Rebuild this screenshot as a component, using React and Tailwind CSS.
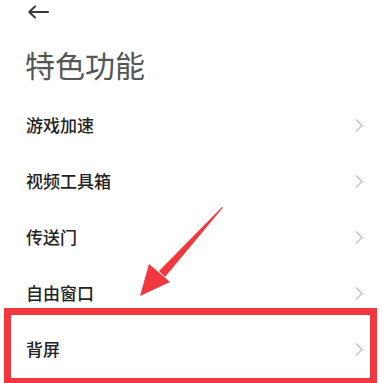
const items = ["游戏加速", "视频工具箱", "传送门", "自由窗口", "背屏"];

function Chevron() {
  return (
    <svg width="9" height="13" viewBox="0 0 9 13" fill="none">
      <path
        d="M1.5 1L7 6.5L1.5 12"
        stroke="#c6c6c6"
        strokeWidth="1.6"
        strokeLinecap="round"
        strokeLinejoin="round"
      />
    </svg>
  );
}

export default function App() {
  return (
    <div
      className="relative w-[382px] h-[383px] overflow-hidden bg-white"
      style={{ fontFamily: '"Noto Sans CJK SC", "Noto Sans", sans-serif' }}
    >
      {/* Back arrow */}
      <div className="h-[25px] pl-[27px] pt-[5px]">
        <svg width="22" height="14" viewBox="0 0 22 14" fill="none">
          <path
            d="M21 7H3M8 1.5L2.2 7L8 12.5"
            stroke="#3a3a3a"
            strokeWidth="2"
            strokeLinecap="round"
            strokeLinejoin="round"
          />
        </svg>
      </div>

      {/* Title */}
      <h1 className="mt-[23px] pl-[25px] text-[30px] leading-[32px] text-[#555] font-normal">
        特色功能
      </h1>

      {/* List */}
      <div className="mt-[17px]">
        {items.map((label) => (
          <div
            key={label}
            className="h-[56px] flex items-center justify-between pl-[26px] pr-[18px]"
          >
            <span className="text-[17px] font-medium text-[#222]">{label}</span>
            <Chevron />
          </div>
        ))}
      </div>

      {/* Highlight box */}
      <div className="absolute left-[4px] top-[308px] w-[373px] h-[75px] border-[7px] border-b-[5px] border-[#f2383e]" />

      {/* Pointer arrow */}
      <svg
        className="absolute left-0 top-0"
        width="382"
        height="383"
        viewBox="0 0 382 383"
      >
        <path
          d="M222 207 L159 271 L165 277 L223 207.5 Z"
          fill="#f2383e"
        />
        <path d="M140 296 L149 264 L170 282 Z" fill="#f2383e" />
      </svg>
    </div>
  );
}
